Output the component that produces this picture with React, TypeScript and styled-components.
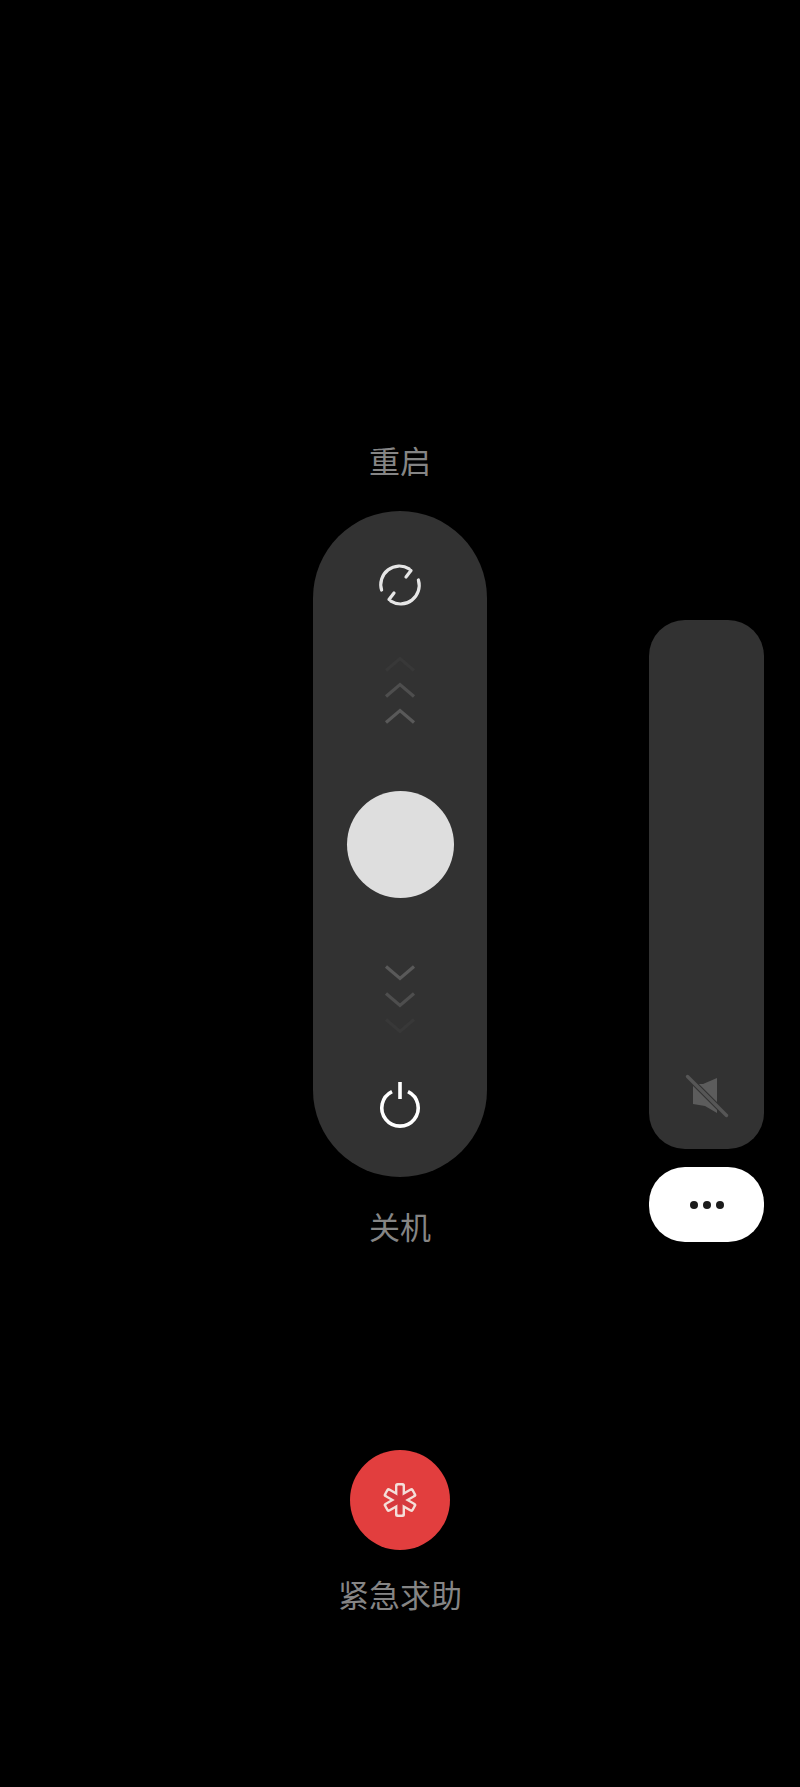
import React from "react";
import styled, { createGlobalStyle } from "styled-components";

const Global = createGlobalStyle`
  html, body { margin: 0; padding: 0; background: #000; }
  #root { width: 800px; height: 1787px; overflow: hidden; }
`;

const Screen = styled.main`
  width: 800px;
  height: 1787px;
  background: #000;
  display: flex;
  flex-direction: column;
  align-items: center;
  padding-top: 438px;
  box-sizing: border-box;
  font-family: "Noto Sans CJK SC", "Noto Sans", sans-serif;
`;

const Controls = styled.section`
  width: 800px;
  display: grid;
  grid-template-columns: 313px 174px 1fr;
`;

const SliderColumn = styled.div`
  grid-column: 2;
  display: flex;
  flex-direction: column;
  align-items: center;
`;

const Label = styled.div`
  color: #858585;
  font-size: 31px;
  line-height: 44px;
  font-weight: 400;
  white-space: nowrap;
`;

const Pill = styled.div`
  width: 174px;
  height: 666px;
  margin: 29px 0 27px;
  border-radius: 87px;
  background: #323232;
  display: flex;
  flex-direction: column;
  align-items: center;
  padding-top: 52px;
  box-sizing: border-box;
`;

const Chevrons = styled.div<{ $top: number; $gap: number }>`
  margin-top: ${(p) => p.$top}px;
  display: flex;
  flex-direction: column;
  gap: ${(p) => p.$gap}px;
`;

const Handle = styled.div`
  width: 107px;
  height: 107px;
  margin-top: 67px;
  border-radius: 50%;
  background: #dedede;
`;

const PowerSlot = styled.div`
  margin-top: 45px;
  display: flex;
`;

const SideColumn = styled.aside`
  grid-column: 3;
  display: flex;
  flex-direction: column;
  padding: 182px 0 0 162px;
`;

const Volume = styled.div`
  width: 115px;
  height: 529px;
  border-radius: 36px;
  background: #323232;
  display: flex;
  justify-content: center;
  align-items: flex-end;
  padding-bottom: 31px;
  box-sizing: border-box;
`;

const MoreButton = styled.div`
  width: 115px;
  height: 75px;
  margin-top: 18px;
  border-radius: 36px;
  background: #ffffff;
  display: flex;
  align-items: center;
  justify-content: center;
  gap: 5px;
`;

const Dot = styled.span`
  width: 8px;
  height: 8px;
  border-radius: 50%;
  background: #1c1c1c;
`;

const Emergency = styled.section`
  margin-top: 202px;
  display: flex;
  flex-direction: column;
  align-items: center;
  gap: 22px;
`;

const SosButton = styled.div`
  width: 100px;
  height: 100px;
  border-radius: 50%;
  background: #e23e3e;
  display: flex;
  align-items: center;
  justify-content: center;
`;

const ChevronIcon = ({ up, color }: { up?: boolean; color: string }) => (
  <svg width="32" height="16" viewBox="0 0 32 16" style={{ display: "block" }}>
    <path
      d={up ? "M2 14.5 L16 2.5 L30 14.5" : "M2 1.5 L16 13.5 L30 1.5"}
      fill="none"
      stroke={color}
      strokeWidth="3.2"
    />
  </svg>
);

const RestartIcon = () => (
  <svg width="44" height="44" viewBox="-22 -22 44 44" style={{ display: "block" }}>
    <g fill="none" stroke="#e6e6e6" strokeWidth="3.2" strokeLinecap="round" strokeLinejoin="round">
      <path d="M-18.4 5 A18.6 18.6 0 0 1 9.2 -16.2" />
      <path d="M11 -14.5 L6 -8" />
      <path d="M18.4 -5 A18.6 18.6 0 0 1 -9.2 16.2" />
      <path d="M-11 14.5 L-6 8" />
    </g>
  </svg>
);

const PowerIcon = () => (
  <svg width="48" height="52" viewBox="-24 -27 48 52" style={{ display: "block" }}>
    <g fill="none" stroke="#ffffff" strokeWidth="3.6">
      <path d="M-8 -14.4 A18.2 18.2 0 1 0 8 -14.4" />
      <path d="M0 -24 V-7" />
    </g>
  </svg>
);

const MuteIcon = () => (
  <svg width="44" height="44" viewBox="0 0 44 44" style={{ display: "block" }}>
    <path d="M8 10 H18 L32 4 V39 L20 32 L8 30 Z" fill="#5c5c5c" />
    <path d="M2 2 L42 42" stroke="#323232" strokeWidth="5.5" />
    <path d="M2.5 2.5 L41.5 41.5" stroke="#565656" strokeWidth="3.4" strokeLinecap="round" />
  </svg>
);

const angles = [0, 60, 120];

const AsteriskIcon = () => (
  <svg width="40" height="40" viewBox="-20 -20 40 40" style={{ display: "block" }}>
    {angles.map((a) => (
      <rect key={a} x="-5" y="-17" width="10" height="34" rx="2.5" fill="#f4dfd9" transform={`rotate(${a})`} />
    ))}
    {angles.map((a) => (
      <rect key={a} x="-2.6" y="-14.6" width="5.2" height="29.2" rx="1" fill="#d63a3e" transform={`rotate(${a})`} />
    ))}
  </svg>
);

export default function App() {
  return (
    <Screen>
      <Global />
      <Controls>
        <SliderColumn>
          <Label>重启</Label>
          <Pill>
            <RestartIcon />
            <Chevrons $top={49} $gap={10}>
              <ChevronIcon up color="#383838" />
              <ChevronIcon up color="#4e4e4e" />
              <ChevronIcon up color="#595959" />
            </Chevrons>
            <Handle />
            <Chevrons $top={67} $gap={10.5}>
              <ChevronIcon color="#595959" />
              <ChevronIcon color="#4e4e4e" />
              <ChevronIcon color="#383838" />
            </Chevrons>
            <PowerSlot>
              <PowerIcon />
            </PowerSlot>
          </Pill>
          <Label>关机</Label>
        </SliderColumn>
        <SideColumn>
          <Volume>
            <MuteIcon />
          </Volume>
          <MoreButton>
            <Dot />
            <Dot />
            <Dot />
          </MoreButton>
        </SideColumn>
      </Controls>
      <Emergency>
        <SosButton>
          <AsteriskIcon />
        </SosButton>
        <Label>紧急求助</Label>
      </Emergency>
    </Screen>
  );
}
